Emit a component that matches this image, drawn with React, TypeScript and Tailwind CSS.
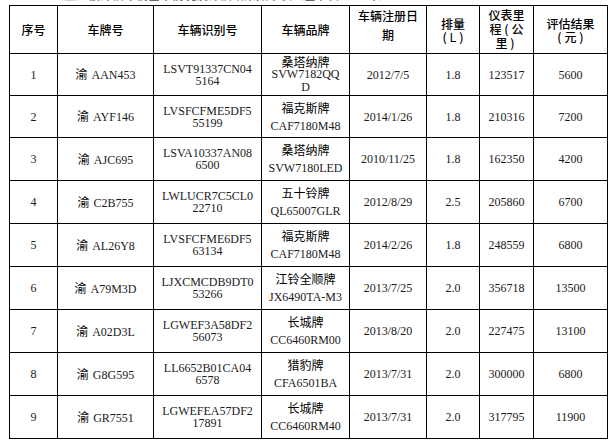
import React from "react";

type Row = {
  n: string;
  plate: string;
  vin: [string, string];
  brand: string[];
  date: string;
  disp: string;
  km: string;
  price: string;
  h: string;
};

const rows: Row[] = [
  { n: "1", plate: "AAN453", vin: ["LSVT91337CN04", "5164"], brand: ["桑塔纳牌", "SVW7182QQ", "D"], date: "2012/7/5", disp: "1.8", km: "123517", price: "5600", h: "h-[42px]" },
  { n: "2", plate: "AYF146", vin: ["LVSFCFME5DF5", "55199"], brand: ["福克斯牌", "CAF7180M48"], date: "2014/1/26", disp: "1.8", km: "210316", price: "7200", h: "h-[42px]" },
  { n: "3", plate: "AJC695", vin: ["LSVA10337AN08", "6500"], brand: ["桑塔纳牌", "SVW7180LED"], date: "2010/11/25", disp: "1.8", km: "162350", price: "4200", h: "h-[43px]" },
  { n: "4", plate: "C2B755", vin: ["LWLUCR7C5CL0", "22710"], brand: ["五十铃牌", "QL65007GLR"], date: "2012/8/29", disp: "2.5", km: "205860", price: "6700", h: "h-[43px]" },
  { n: "5", plate: "AL26Y8", vin: ["LVSFCFME6DF5", "63134"], brand: ["福克斯牌", "CAF7180M48"], date: "2014/2/26", disp: "1.8", km: "248559", price: "6800", h: "h-[43px]" },
  { n: "6", plate: "A79M3D", vin: ["LJXCMCDB9DT0", "53266"], brand: ["江铃全顺牌", "JX6490TA-M3"], date: "2013/7/25", disp: "2.0", km: "356718", price: "13500", h: "h-[43px]" },
  { n: "7", plate: "A02D3L", vin: ["LGWEF3A58DF2", "56073"], brand: ["长城牌", "CC6460RM00"], date: "2013/8/20", disp: "2.0", km: "227475", price: "13100", h: "h-[43px]" },
  { n: "8", plate: "G8G595", vin: ["LL6652B01CA04", "6578"], brand: ["猎豹牌", "CFA6501BA"], date: "2013/7/31", disp: "2.0", km: "300000", price: "6800", h: "h-[43px]" },
  { n: "9", plate: "GR7551", vin: ["LGWEFEA57DF2", "17891"], brand: ["长城牌", "CC6460RM40"], date: "2013/7/31", disp: "2.0", km: "317795", price: "11900", h: "h-[43px]" },
];

const cell =
  "flex flex-col items-center justify-center text-center border-r border-b border-black";
const cjk = "font-['Noto_Sans_CJK_SC',sans-serif] font-medium";
const cjkBody = "font-['Noto_Sans_CJK_SC',sans-serif]";

function P({ c }: { c: string }) {
  return <span className="inline-block w-[10px] text-center">{c}</span>;
}

export default function App() {
  return (
    <div className="w-[616px] h-[446px] bg-white text-black text-[12px] overflow-hidden font-['Liberation_Serif','Noto_Sans_CJK_SC',serif]">
      <div className="h-[5px] overflow-hidden pl-[52px]">
        <div className={`-mt-[11px] leading-[12px] whitespace-nowrap text-[#666] ${cjk}`}>
          （三）被评估车辆基本情况及评估结果如下表（基准日2015年）
        </div>
      </div>
      <div className="ml-[9px] w-[599px] border-t border-l border-black grid grid-cols-[48px_96px_108px_88px_77px_53px_54px_74px]">
        <div className={`${cell} h-[48px] leading-[14px] ${cjk}`}>序号</div>
        <div className={`${cell} h-[48px] leading-[14px] ${cjk}`}>车牌号</div>
        <div className={`${cell} h-[48px] leading-[14px] ${cjk}`}>车辆识别号</div>
        <div className={`${cell} h-[48px] leading-[14px] ${cjk}`}>车辆品牌</div>
        <div className={`flex flex-col items-center justify-start text-center border-r border-b border-black h-[48px] leading-[19px] ${cjk}`}>
          <span>车辆注册日</span>
          <span>期</span>
        </div>
        <div className={`${cell} h-[48px] leading-[13px] pt-[2px] ${cjk}`}>
          <span>排量</span>
          <span className="whitespace-nowrap">
            <P c="(" />
            <span className="font-['Liberation_Sans',sans-serif]">L</span>
            <P c=")" />
          </span>
        </div>
        <div className={`flex flex-col items-center justify-start text-center border-r border-b border-black h-[48px] leading-[14px] pt-[2px] ${cjk}`}>
          <span>仪表里</span>
          <span className="whitespace-nowrap">
            程<P c="(" />公
          </span>
          <span className="whitespace-nowrap">
            里<P c=")" />
          </span>
        </div>
        <div className={`${cell} h-[48px] leading-[13px] ${cjk}`}>
          <span>评估结果</span>
          <span className="whitespace-nowrap">
            <P c="(" />元<P c=")" />
          </span>
        </div>
        {rows.map((r) => (
          <React.Fragment key={r.n}>
            <div className={`${cell} ${r.h} text-[#1a1a1a]`}>{r.n}</div>
            <div className={`${cell} ${r.h} text-[#1a1a1a]`}>
              <span className="whitespace-nowrap">
                <span className={`text-black ${cjkBody}`}>渝</span>
                <span className="ml-[4px]">{r.plate}</span>
              </span>
            </div>
            <div className={`${cell} ${r.h} leading-[12px] text-[#1a1a1a]`}>
              <span>{r.vin[0]}</span>
              <span>{r.vin[1]}</span>
            </div>
            <div
              className={`${cell} ${r.h} ${r.brand.length === 3 ? "leading-[13px]" : "leading-[19px]"} text-[#1a1a1a]`}
            >
              <span className={`text-black ${cjkBody}`}>{r.brand[0]}</span>
              {r.brand.slice(1).map((b) => (
                <span key={b}>{b}</span>
              ))}
            </div>
            <div className={`${cell} ${r.h} text-[#1a1a1a]`}>{r.date}</div>
            <div className={`${cell} ${r.h} text-[#1a1a1a]`}>{r.disp}</div>
            <div className={`${cell} ${r.h} text-[#1a1a1a]`}>{r.km}</div>
            <div className={`${cell} ${r.h} text-[#1a1a1a]`}>{r.price}</div>
          </React.Fragment>
        ))}
      </div>
    </div>
  );
}
